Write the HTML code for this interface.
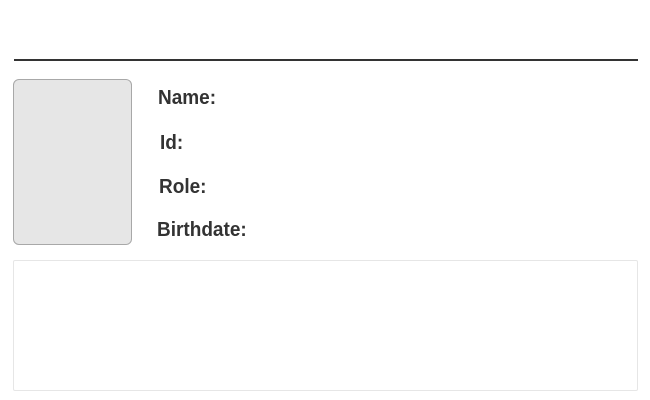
<!DOCTYPE html>
<html><head><style>
body{margin:0;width:650px;height:400px;background:#fff;font-family:"Liberation Sans",sans-serif;position:relative;overflow:hidden}
.line{position:absolute;left:14px;top:59px;width:624px;height:2px;background:#333}
.photo{position:absolute;left:13px;top:79px;width:117px;height:164px;background:#e6e6e6;border:1px solid #a8a8a8;border-radius:6px}
.l{position:absolute;font-weight:bold;font-size:19px;color:#333;transform:scaleY(1.06);transform-origin:left top}
.box{position:absolute;left:13px;top:260px;width:623px;height:129px;border:1px solid #e6e6e6;border-radius:2px}
</style></head><body>
<div class="line"></div>
<div class="photo"></div>
<div class="l" style="left:158px;top:87px">Name:</div>
<div class="l" style="left:160px;top:132px">Id:</div>
<div class="l" style="left:159px;top:176px">Role:</div>
<div class="l" style="left:157px;top:219px">Birthdate:</div>
<div class="box"></div>
</body></html>
